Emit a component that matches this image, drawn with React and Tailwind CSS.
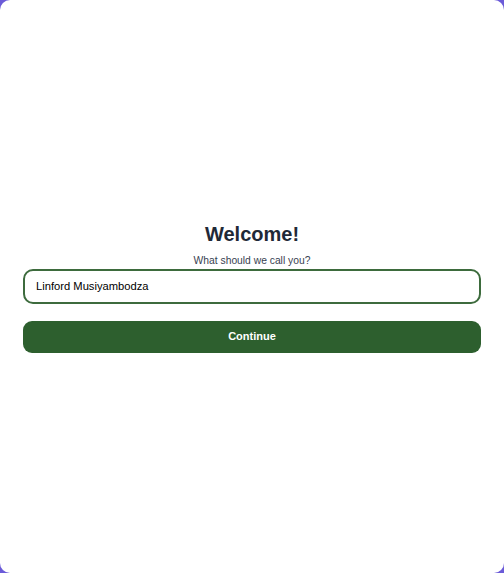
import React, { useEffect, useRef, useState } from 'react';

const App = () => {
  const [name, setName] = useState('Linford Musiyambodza');
  const inputRef = useRef(null);

  useEffect(() => {
    const el = inputRef.current;
    if (el) {
      el.focus();
      el.setSelectionRange(el.value.length, el.value.length);
    }
  }, []);

  return (
    <div className="h-[573px] w-full bg-[#6b5bd8]">
      <div
        className="flex h-full w-full flex-col items-center justify-center rounded-[10px] bg-white px-[23px]"
        style={{ fontFamily: '"Liberation Sans", Arial, sans-serif' }}
      >
        <h1 className="text-[20px] font-bold leading-[26px] text-[#1f2937]">Welcome!</h1>
        <p className="mt-[7px] text-[10.3px] leading-[14px] text-[#374151]">What should we call you?</p>
        <input
          ref={inputRef}
          value={name}
          onChange={(e) => setName(e.target.value)}
          className="mt-[1px] h-[35px] w-full rounded-[10px] border-2 border-[#3d6b3d] px-[11px] text-[11.2px] text-black caret-black outline-none"
        />
        <button className="mt-[17px] h-[32px] w-full rounded-[9px] bg-[#2d5f2e] text-[11px] font-bold text-white">
          Continue
        </button>
      </div>
    </div>
  );
};

export default App;
